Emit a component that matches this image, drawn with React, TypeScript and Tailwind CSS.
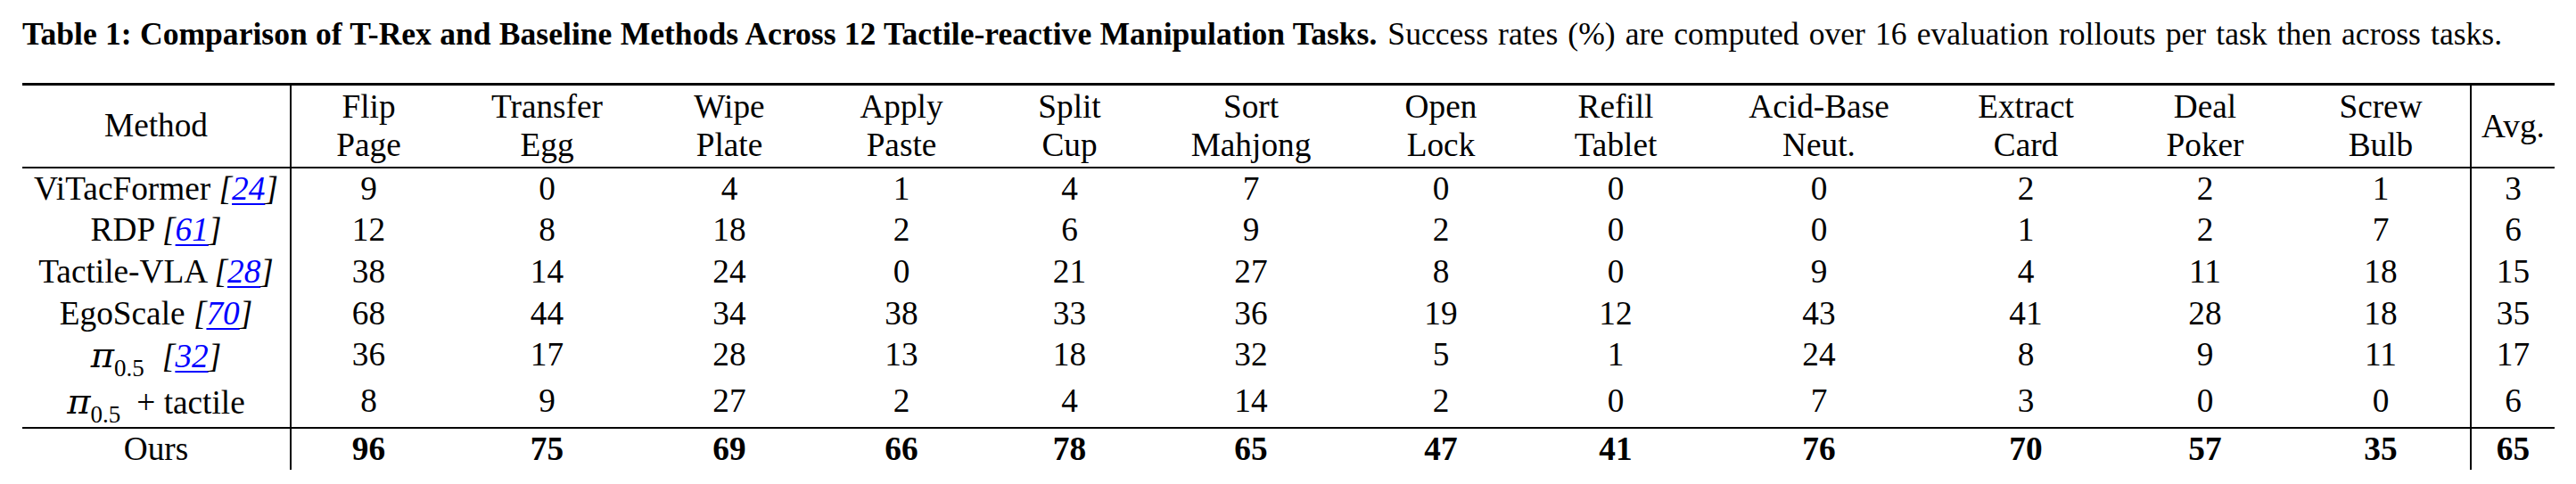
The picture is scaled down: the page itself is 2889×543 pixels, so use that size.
const COLS =
  'grid grid-cols-[302px_173px_227px_182px_204px_173px_234px_192px_200px_256px_208px_194px_200px_95px]'

const TASKS: [string, string][] = [
  ['Flip', 'Page'],
  ['Transfer', 'Egg'],
  ['Wipe', 'Plate'],
  ['Apply', 'Paste'],
  ['Split', 'Cup'],
  ['Sort', 'Mahjong'],
  ['Open', 'Lock'],
  ['Refill', 'Tablet'],
  ['Acid-Base', 'Neut.'],
  ['Extract', 'Card'],
  ['Deal', 'Poker'],
  ['Screw', 'Bulb'],
]

type Row = { name: string; cite?: string; pi?: 'cite' | 'tactile'; scores: number[]; avg: number }

const ROWS: Row[] = [
  { name: 'ViTacFormer', cite: '24', scores: [9, 0, 4, 1, 4, 7, 0, 0, 0, 2, 2, 1], avg: 3 },
  { name: 'RDP', cite: '61', scores: [12, 8, 18, 2, 6, 9, 2, 0, 0, 1, 2, 7], avg: 6 },
  { name: 'Tactile-VLA', cite: '28', scores: [38, 14, 24, 0, 21, 27, 8, 0, 9, 4, 11, 18], avg: 15 },
  { name: 'EgoScale', cite: '70', scores: [68, 44, 34, 38, 33, 36, 19, 12, 43, 41, 28, 18], avg: 35 },
  { name: '', pi: 'cite', cite: '32', scores: [36, 17, 28, 13, 18, 32, 5, 1, 24, 8, 9, 11], avg: 17 },
  { name: '', pi: 'tactile', scores: [8, 9, 27, 2, 4, 14, 2, 0, 7, 3, 0, 0], avg: 6 },
]

const OURS = { scores: [96, 75, 69, 66, 78, 65, 47, 41, 76, 70, 57, 35], avg: 65 }

function Cite({ n }: { n: string }) {
  return (
    <span className="italic">
      [<span className="text-[#0000ff] underline decoration-[1.5px] underline-offset-[4px]">{n}</span>]
    </span>
  )
}

// math-italic pi with an upright 0.5 subscript
function Pi() {
  return (
    <span className="whitespace-nowrap">
      <span className="font-['DejaVu_Serif',serif] text-[40px] italic">π</span>
      <span className="relative top-[10px] text-[27px]">0.5</span>
    </span>
  )
}

function MethodCell({ row }: { row: Row }) {
  if (row.pi === 'cite') {
    return (
      <>
        <Pi />
        <span className="ml-[20px]">
          <Cite n={row.cite!} />
        </span>
      </>
    )
  }
  if (row.pi === 'tactile') {
    return (
      <>
        <Pi />
        <span className="ml-[18px]">+ tactile</span>
      </>
    )
  }
  return (
    <>
      {row.name} <Cite n={row.cite!} />
    </>
  )
}

export default function App() {
  return (
    <div className="min-h-[543px] w-[2889px] bg-white pl-[25px] font-['Liberation_Serif',serif] text-black">
      <p className="whitespace-nowrap pt-[18px] text-[35.6px] leading-[40px]">
        <span className="font-bold [word-spacing:0.4px]">
          Table 1: Comparison of T-Rex and Baseline Methods Across 12 Tactile-reactive Manipulation Tasks.
        </span>
        <span className="ml-[12px] [word-spacing:2.2px]">
          Success rates (%) are computed over 16 evaluation rollouts per task then across tasks.
        </span>
      </p>

      <div className="mt-[35px] w-[2840px] border-t-[3.5px] border-black text-[37.3px]">
        {/* header */}
        <div className={`${COLS} border-b-2 border-black leading-[43px]`}>
          <div className="flex items-center justify-center border-r-2 border-black pt-[1.5px] pb-[3px]">Method</div>
          {TASKS.map(([a, b]) => (
            <div key={a} className="flex flex-col items-center pt-[1.5px] pb-[3px]">
              <span>{a}</span>
              <span>{b}</span>
            </div>
          ))}
          <div className="flex items-center justify-center border-l-2 border-black">Avg.</div>
        </div>

        {/* baselines */}
        <div className="border-b-2 border-black leading-[46.7px]">
          {ROWS.map((row, i) => (
            <div key={i} className={COLS}>
              <div className="whitespace-nowrap border-r-2 border-black text-center">
                <MethodCell row={row} />
              </div>
              {row.scores.map((s, j) => (
                <div key={j} className="text-center">
                  {s}
                </div>
              ))}
              <div className="border-l-2 border-black text-center">{row.avg}</div>
            </div>
          ))}
        </div>

        {/* ours */}
        <div className={`${COLS} leading-[46.7px]`}>
          <div className="border-r-2 border-black text-center">Ours</div>
          {OURS.scores.map((s, j) => (
            <div key={j} className="text-center font-bold">
              {s}
            </div>
          ))}
          <div className="border-l-2 border-black text-center font-bold">{OURS.avg}</div>
        </div>
      </div>
    </div>
  )
}
